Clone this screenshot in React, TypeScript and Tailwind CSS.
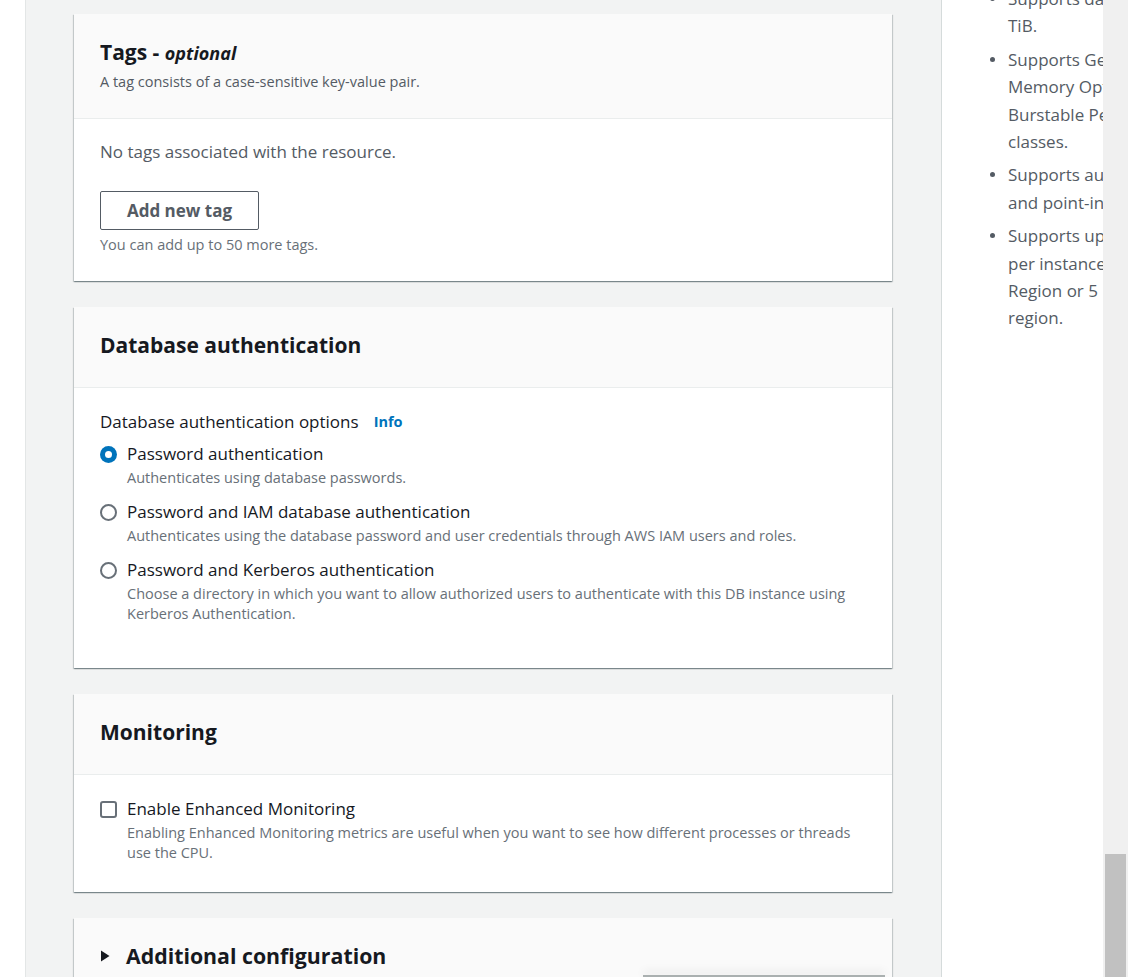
import React from "react";

const cardShadow =
  "shadow-[0_1px_1px_0_rgba(0,28,36,0.3),1px_1px_1px_0_rgba(0,28,36,0.15),-1px_1px_1px_0_rgba(0,28,36,0.15)]";

function Radio({ checked }: { checked?: boolean }) {
  if (checked) {
    return (
      <span className="mt-[4px] flex h-[17px] w-[17px] shrink-0 items-center justify-center rounded-full bg-[#0073bb]">
        <span className="h-[7px] w-[7px] rounded-full bg-white" />
      </span>
    );
  }
  return <span className="mt-[4px] h-[17px] w-[17px] shrink-0 rounded-full border-2 border-[#687078] bg-white" />;
}

const authOptions = [
  {
    label: "Password authentication",
    desc: "Authenticates using database passwords.",
    checked: true,
  },
  {
    label: "Password and IAM database authentication",
    desc: "Authenticates using the database password and user credentials through AWS IAM users and roles.",
  },
  {
    label: "Password and Kerberos authentication",
    desc: "Choose a directory in which you want to allow authorized users to authenticate with this DB instance using Kerberos Authentication.",
  },
];

const engineNotes = [
  ["Supports database size up to 64", "TiB."],
  ["Supports General Purpose,", "Memory Optimized, and", "Burstable Performance instance", "classes."],
  ["Supports automated backup", "and point-in-time recovery."],
  ["Supports up to 15 Read Replicas", "per instance, within a single", "Region or 5 read replicas cross-", "region."],
];

export default function App() {
  return (
    <div
      className="relative flex h-[977px] w-[1128px] overflow-hidden bg-[#f2f3f3] text-[#16191f]"
      style={{ fontFamily: '"Open Sans", "Noto Sans", Arial, sans-serif' }}
    >
      {/* collapsed nav strip */}
      <div className="w-[26px] shrink-0 border-r border-[#e3e6e6] bg-white" />

      <main className="flex w-[915px] shrink-0 flex-col gap-[26px] pl-[48px] pt-[14px]">
        {/* Tags */}
        <section className={`w-[818px] bg-white ${cardShadow}`}>
          <div className="border-b border-[#eaeded] bg-[#fafafa] px-[26px] pb-[26px] pt-[24px]">
            <h2 className="text-[21px] font-bold leading-[28px]">
              Tags - <i className="text-[18px]">optional</i>
            </h2>
            <p className="mt-[5px] text-[14.5px] leading-[20px] text-[#545b64]">
              A tag consists of a case-sensitive key-value pair.
            </p>
          </div>
          <div className="px-[26px] pb-[26px] pt-[21px]">
            <p className="text-[17px] leading-[24px] text-[#545b64]">No tags associated with the resource.</p>
            <button className="mt-[27px] h-[39px] w-[159px] rounded-[2px] border border-[#545b64] bg-white text-[17px] font-bold text-[#545b64]">
              Add new tag
            </button>
            <p className="mt-[5px] text-[14.5px] leading-[20px] text-[#687078]">You can add up to 50 more tags.</p>
          </div>
        </section>

        {/* Database authentication */}
        <section className={`w-[818px] bg-white ${cardShadow}`}>
          <div className="border-b border-[#eaeded] bg-[#fafafa] px-[26px] pb-[28px] pt-[24px]">
            <h2 className="text-[21px] font-bold leading-[28px]">Database authentication</h2>
          </div>
          <div className="px-[26px] pb-[44px] pt-[22px]">
            <div className="flex items-center gap-[15px] text-[17px] leading-[24px]">
              <span>Database authentication options</span>
              <a className="text-[14.5px] font-bold text-[#0073bb]">Info</a>
            </div>
            <div className="mt-[8px] flex flex-col gap-[12px]">
              {authOptions.map((o) => (
                <label key={o.label} className="flex gap-[10px]">
                  <Radio checked={o.checked} />
                  <div>
                    <div className="text-[17px] leading-[24px]">{o.label}</div>
                    <div className="mt-[2px] max-w-[740px] text-[14.5px] leading-[20px] text-[#687078]">{o.desc}</div>
                  </div>
                </label>
              ))}
            </div>
          </div>
        </section>

        {/* Monitoring */}
        <section className={`w-[818px] bg-white ${cardShadow}`}>
          <div className="border-b border-[#eaeded] bg-[#fafafa] px-[26px] pb-[28px] pt-[24px]">
            <h2 className="text-[21px] font-bold leading-[28px]">Monitoring</h2>
          </div>
          <div className="px-[26px] pb-[29px] pt-[22px]">
            <label className="flex gap-[10px]">
              <span className="mt-[4px] h-[17px] w-[17px] shrink-0 rounded-[3px] border-2 border-[#687078] bg-white" />
              <div>
                <div className="text-[17px] leading-[24px]">Enable Enhanced Monitoring</div>
                <div className="mt-[2px] max-w-[740px] text-[14.5px] leading-[20px] text-[#687078]">
                  Enabling Enhanced Monitoring metrics are useful when you want to see how different processes or threads
                  use the CPU.
                </div>
              </div>
            </label>
          </div>
        </section>

        {/* Additional configuration */}
        <section className={`w-[818px] bg-[#fafafa] ${cardShadow}`}>
          <div className="flex items-center gap-[16px] px-[26px] pb-[28px] pt-[24px]">
            <svg width="10" height="12" viewBox="0 0 10 12" className="shrink-0">
              <path d="M1 0.5 L9.5 6 L1 11.5 Z" fill="#16191f" />
            </svg>
            <h2 className="text-[21.3px] font-bold leading-[28px]">Additional configuration</h2>
          </div>
        </section>
      </main>

      {/* help panel */}
      <aside className="w-[162px] shrink-0 overflow-hidden border-l border-[#d5dbdb] bg-white">
        <ul className="-mt-[15px] flex w-[300px] flex-col gap-[6px] pl-[48px] text-[17px] leading-[27.4px] text-[#545b64]">
          {engineNotes.map((lines, i) => (
            <li key={i} className="flex gap-[13px]">
              <span className="mt-[11px] h-[5px] w-[5px] shrink-0 rounded-full bg-[#545b64]" />
              <span className="whitespace-nowrap">
                {lines.map((l, j) => (
                  <span key={j} className="block">
                    {l}
                  </span>
                ))}
              </span>
            </li>
          ))}
        </ul>
      </aside>

      {/* scrollbar */}
      <div className="w-[25px] shrink-0 bg-[#f0f0f0] px-[2px]">
        <div className="mt-[854px] h-[123px] bg-[#c1c1c1]" />
      </div>

      {/* floating bar edge peeking in at the bottom */}
      <div className="absolute left-[643px] top-[975px] h-[4px] w-[242px] border-t-2 border-[#aab0b0] bg-white shadow-[0_-4px_8px_rgba(0,0,0,0.08)]" />
    </div>
  );
}
